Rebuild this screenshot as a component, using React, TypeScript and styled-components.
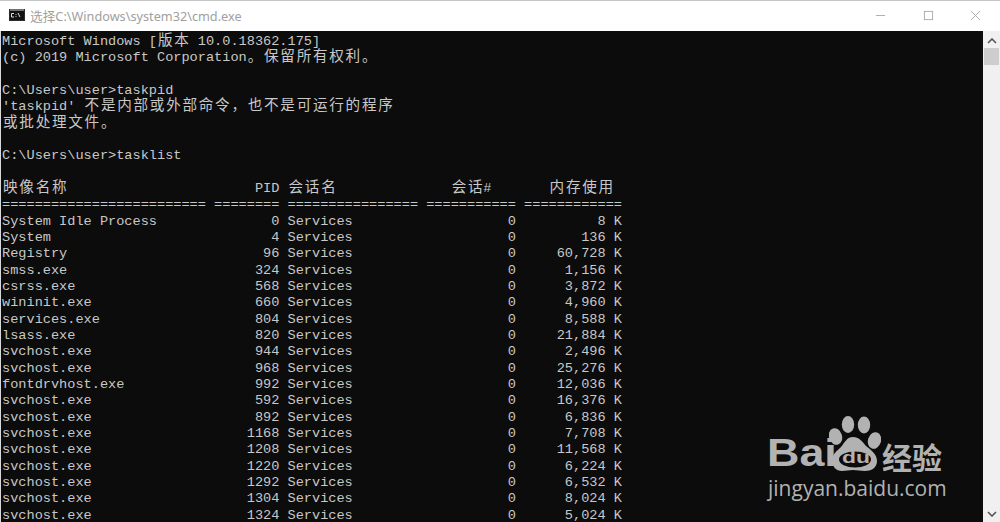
import styled, { createGlobalStyle } from "styled-components";

const GlobalStyle = createGlobalStyle`
  html, body {
    margin: 0;
    padding: 0;
    background: #0c0c0c;
    overflow: hidden;
  }
`;

const pad = (n: number) => " ".repeat(n);

// name, pid, memory
const processes: [string, string, string][] = [
  ["System Idle Process", "0", "8"],
  ["System", "4", "136"],
  ["Registry", "96", "60,728"],
  ["smss.exe", "324", "1,156"],
  ["csrss.exe", "568", "3,872"],
  ["wininit.exe", "660", "4,960"],
  ["services.exe", "804", "8,588"],
  ["lsass.exe", "820", "21,884"],
  ["svchost.exe", "944", "2,496"],
  ["svchost.exe", "968", "25,276"],
  ["fontdrvhost.exe", "992", "12,036"],
  ["svchost.exe", "592", "16,376"],
  ["svchost.exe", "892", "6,836"],
  ["svchost.exe", "1168", "7,708"],
  ["svchost.exe", "1208", "11,568"],
  ["svchost.exe", "1220", "6,224"],
  ["svchost.exe", "1292", "6,532"],
  ["svchost.exe", "1304", "8,024"],
  ["svchost.exe", "1324", "5,024"],
];

const lines: string[] = [
  "Microsoft Windows [版本 10.0.18362.175]",
  "(c) 2019 Microsoft Corporation。保留所有权利。",
  "",
  "C:\\Users\\user>taskpid",
  "'taskpid' 不是内部或外部命令\uff0c也不是可运行的程序",
  "或批处理文件。",
  "",
  "C:\\Users\\user>tasklist",
  "",
  "映像名称" + pad(23) + "PID 会话名" + pad(14) + "会话#" + pad(7) + "内存使用",
  "=".repeat(25) + " " + "=".repeat(8) + " " + "=".repeat(16) + " " + "=".repeat(11) + " " + "=".repeat(12),
  ...processes.map(
    ([name, pid, mem]) =>
      name.padEnd(25) + " " + pid.padStart(8) + " " + "Services".padEnd(16) + " " + "0".padStart(11) + " " + (mem + " K").padStart(12)
  ),
];

const isWide = (part: string) => /[\u3000-\u9fff\uff00-\uffef]/.test(part);

const ConsoleLine = ({ text }: { text: string }) => (
  <Line>
    {text.split(/([\u3000-\u9fff\uff00-\uffef]+)/).map((part, i) =>
      isWide(part) ? <Wide key={i}>{part}</Wide> : part
    )}
  </Line>
);

const App = () => (
  <Window>
    <GlobalStyle />
    <TitleBar>
      <AppIcon viewBox="0 0 16 12">
        <rect width="16" height="12" fill="#2b2b2b" />
        <rect x="1" y="2" width="14" height="9" fill="#111" />
        <path d="M2.5 4.5H5M2.5 4.5V8H5M7 5v.8M7 7.2V8M9 4l2 4" stroke="#ddd" strokeWidth="1" fill="none" />
        <rect x="1" y="0.5" width="14" height="1" fill="#bbb" />
      </AppIcon>
      <Title>选择C:\Windows\system32\cmd.exe</Title>
      <Controls>
        <ControlIcon viewBox="0 0 12 12">
          <path d="M1 6h10" stroke="#a8a8a8" strokeWidth="1" />
        </ControlIcon>
        <ControlIcon viewBox="0 0 12 12">
          <rect x="1.5" y="1.5" width="9" height="9" fill="none" stroke="#a8a8a8" strokeWidth="1" />
        </ControlIcon>
        <ControlIcon viewBox="0 0 12 12">
          <path d="M1 1l10 10M11 1L1 11" stroke="#a8a8a8" strokeWidth="1" />
        </ControlIcon>
      </Controls>
    </TitleBar>
    <Body>
      <Terminal>
        {lines.map((text, i) => (
          <ConsoleLine key={i} text={text} />
        ))}
      </Terminal>
      <ScrollBar>
        <Arrow viewBox="0 0 10 6">
          <path d="M1 5l4-4 4 4" fill="none" stroke="#555" strokeWidth="1.6" />
        </Arrow>
        <Thumb />
        <Arrow viewBox="0 0 10 6">
          <path d="M1 1l4 4 4-4" fill="none" stroke="#555" strokeWidth="1.6" />
        </Arrow>
      </ScrollBar>
      <Watermark>
        <LogoRow>
          <BaiText>Bai</BaiText>
          <Paw viewBox="0 0 52 55">
            <ellipse cx="6.5" cy="20.5" rx="6.5" ry="8.5" fill="#b2b2b2" transform="rotate(-18 6.5 20.5)" />
            <ellipse cx="19" cy="8.5" rx="6.2" ry="8.5" fill="#b2b2b2" />
            <ellipse cx="35" cy="9" rx="6.2" ry="8.5" fill="#b2b2b2" />
            <ellipse cx="45.5" cy="24.5" rx="6.5" ry="8.5" fill="#b2b2b2" transform="rotate(18 45.5 24.5)" />
            <path d="M24 21c6 0 9 4 13 9 5 4 11 8 11 15 0 7-6 10-12 10-4 0-8-1-12-1s-7 1-11 1C7 55 3 50 3 45c0-7 5-10 9-14 4-5 6-10 12-10z" fill="#b2b2b2" />
            <ellipse cx="26" cy="43.5" rx="16" ry="8" fill="#0c0c0c" />
          </Paw>
          <DuText>du</DuText>
          <CnText>经验</CnText>
        </LogoRow>
        <SiteText>jingyan.baidu.com</SiteText>
      </Watermark>
    </Body>
  </Window>
);

const Window = styled.div`
  width: 1000px;
  height: 522px;
  display: flex;
  flex-direction: column;
  overflow: hidden;
  background: #fff;
  border-top: 1px solid #c4c4c4;
  box-sizing: border-box;
`;

const TitleBar = styled.header`
  height: 30px;
  flex: none;
  box-sizing: border-box;
  display: flex;
  align-items: center;
  padding: 0 0 2px 9px;
  background: #fff;
`;

const AppIcon = styled.svg`
  width: 16px;
  height: 12px;
  margin-right: 5px;
`;

const Title = styled.span`
  font-family: "Noto Sans", "Noto Sans CJK SC", sans-serif;
  font-size: 12.7px;
  color: #a0a0a0;
`;

const Controls = styled.div`
  margin-left: auto;
  display: flex;
  align-items: center;
  gap: 36.5px;
  padding-right: 19px;
`;

const ControlIcon = styled.svg`
  width: 11px;
  height: 11px;
`;

const Body = styled.main`
  position: relative;
  flex: 1;
  min-height: 0;
  display: flex;
  border-left: 1px solid #d8d8d8;
`;

const Terminal = styled.div`
  flex: 1;
  background: #0c0c0c;
  padding: 3px 0 0 1px;
  overflow: hidden;
`;

const Line = styled.div`
  height: 16.33px;
  line-height: 16.33px;
  white-space: pre;
  font-family: "Liberation Mono", monospace;
  font-size: 13.6px;
  color: #c8c8c8;
`;

const Wide = styled.span`
  position: relative;
  left: 1px;
  font-family: "Noto Sans CJK SC", sans-serif;
  font-size: 14.6px;
  line-height: 0;
  letter-spacing: 1.72px;
`;

const ScrollBar = styled.aside`
  width: 17px;
  flex: none;
  display: flex;
  flex-direction: column;
  align-items: center;
  background: #f0f0f0;
`;

const Arrow = styled.svg`
  width: 10px;
  height: 6px;
  flex: none;
  margin: 7px 0 4px;
  &:last-child {
    margin: auto 0 5px;
  }
`;

const Thumb = styled.div`
  width: 15px;
  height: 17px;
  background: #cdcdcd;
`;

const Watermark = styled.div`
  position: absolute;
  left: 767px;
  top: 384px;
  width: 190px;
  color: #b2b2b2;
`;

const LogoRow = styled.div`
  position: relative;
  height: 56px;
`;

const BaiText = styled.span`
  position: absolute;
  left: -1px;
  top: 18px;
  font-family: "Liberation Sans", sans-serif;
  font-weight: 700;
  font-size: 39px;
  line-height: 40px;
  transform: scaleX(1.15);
  transform-origin: left center;
`;

const Paw = styled.svg`
  position: absolute;
  left: 61px;
  top: 1px;
  width: 52px;
  height: 55px;
`;

const DuText = styled.span`
  position: absolute;
  left: 74px;
  top: 34px;
  font-family: "Liberation Sans", sans-serif;
  font-weight: 700;
  font-size: 17px;
  line-height: 17px;
  transform: scaleX(1.35);
  transform-origin: left center;
`;

const CnText = styled.span`
  position: absolute;
  left: 114px;
  top: 25px;
  font-family: "Noto Sans CJK SC", sans-serif;
  font-weight: 700;
  font-size: 30px;
  line-height: 32px;
`;

const SiteText = styled.div`
  margin-top: 5px;
  font-family: "Open Sans", sans-serif;
  font-size: 21px;
  line-height: 24px;
`;

export default App;
